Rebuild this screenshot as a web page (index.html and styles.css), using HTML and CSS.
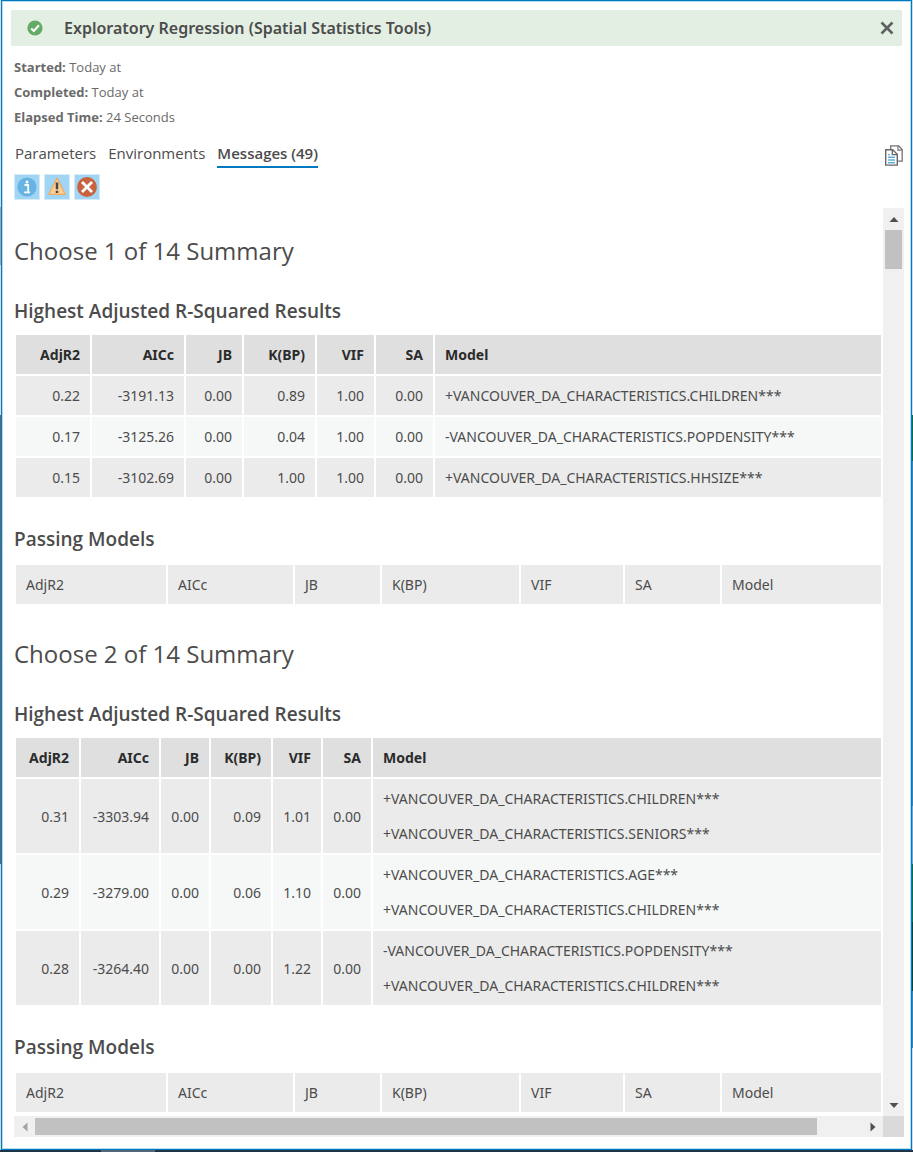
FILE: index.html
```html
<!DOCTYPE html>
<html lang="en">
<head>
<meta charset="utf-8">
<title>Exploratory Regression (Spatial Statistics Tools)</title>
<link rel="stylesheet" href="styles.css">
</head>
<body>
<main class="dialog">
  <header class="banner">
    <svg class="status" viewBox="0 0 16 16" aria-hidden="true"><circle cx="8" cy="8" r="7.6" fill="#62ab65"/><path d="M4.2 8.4l2.6 2.5 5.2-5.6" fill="none" stroke="#fff" stroke-width="2.1"/></svg>
    <h1 class="title">Exploratory Regression (Spatial Statistics Tools)</h1>
    <button class="close" aria-label="Close"><svg viewBox="0 0 14 14"><path d="M1.5 1.5l11 11M12.5 1.5l-11 11" stroke="#5f6360" stroke-width="2.6"/></svg></button>
  </header>

  <div class="info">
    <div><b>Started:</b> Today at</div>
    <div><b>Completed:</b> Today at</div>
    <div><b>Elapsed Time:</b> 24 Seconds</div>
  </div>

  <div class="toolbar">
    <nav class="tabs">
      <a class="tab" href="#parameters">Parameters</a>
      <a class="tab" href="#environments">Environments</a>
      <a class="tab active" href="#messages">Messages (49)</a>
    </nav>
    <button class="copy" aria-label="Copy messages"><svg viewBox="0 0 18 21">
      <path d="M5.7.8h8l3.5 3.700v11.700H5.700z" fill="#fff" stroke="#747474" stroke-width="1.3"/><path d="M13 .8v4.400h4.200" fill="none" stroke="#747474" stroke-width="1.2"/>
      <path d="M.7 4.700h7l4.600 4.500v10.900H.7z" fill="#fff" stroke="#686868" stroke-width="1.4"/><path d="M7.300 4.700v5h5" fill="none" stroke="#686868" stroke-width="1.3"/>
      <path d="M3 9.600h2M3 12.300h7M3 15h7M3 17.700h7" stroke="#61b1df" stroke-width="1.4"/></svg></button>
  </div>

  <div class="filters">
    <button class="filter" aria-label="Information"><svg viewBox="0 0 24 24"><circle cx="12" cy="12" r="9.6" fill="#67b3e3"/><circle cx="12" cy="7" r="1.5" fill="#fff"/><path d="M9.5 10h3.700v7M9.300 17.300h5.700" fill="none" stroke="#fff" stroke-width="1.8"/></svg></button>
    <button class="filter" aria-label="Warnings"><svg viewBox="0 0 24 24"><path d="M12 3l8.200 16.300H3.800z" fill="#fbcf96" stroke="#f0aa5d" stroke-width="1.2" stroke-linejoin="round"/><path d="M12 7.400v6.800M12 15.700v2.400" stroke="#464646" stroke-width="2.5"/></svg></button>
    <button class="filter" aria-label="Errors"><svg viewBox="0 0 24 24"><circle cx="12" cy="12" r="9.9" fill="#c9623f"/><path d="M7 7l10 10M17 7L7 17" stroke="#fff" stroke-width="2.8"/></svg></button>
  </div>

  <div class="viewer">
    <div class="messages">
      <section>
        <h2>Choose 1 of 14 Summary</h2>
        <h3>Highest Adjusted R-Squared Results</h3>
        <table class="results">
          <colgroup><col class="w74"><col class="w92"><col class="w56"><col class="w71"><col class="w57"><col class="w57"><col></colgroup>
          <thead><tr><th>AdjR2</th><th>AICc</th><th>JB</th><th>K(BP)</th><th>VIF</th><th>SA</th><th>Model</th></tr></thead>
          <tbody>
            <tr><td>0.22</td><td>-3191.13</td><td>0.00</td><td>0.89</td><td>1.00</td><td>0.00</td><td>+VANCOUVER_DA_CHARACTERISTICS.CHILDREN***</td></tr>
            <tr><td>0.17</td><td>-3125.26</td><td>0.00</td><td>0.04</td><td>1.00</td><td>0.00</td><td>-VANCOUVER_DA_CHARACTERISTICS.POPDENSITY***</td></tr>
            <tr><td>0.15</td><td>-3102.69</td><td>0.00</td><td>1.00</td><td>1.00</td><td>0.00</td><td>+VANCOUVER_DA_CHARACTERISTICS.HHSIZE***</td></tr>
          </tbody>
        </table>
        <h3>Passing Models</h3>
        <table class="passing">
          <colgroup><col class="w150"><col class="w125"><col class="w85"><col class="w137"><col class="w102"><col class="w95"><col></colgroup>
          <tbody><tr><td>AdjR2</td><td>AICc</td><td>JB</td><td>K(BP)</td><td>VIF</td><td>SA</td><td>Model</td></tr></tbody>
        </table>
      </section>
      <section>
        <h2>Choose 2 of 14 Summary</h2>
        <h3>Highest Adjusted R-Squared Results</h3>
        <table class="results">
          <colgroup><col class="w63"><col class="w78"><col class="w48"><col class="w60"><col class="w48"><col class="w48"><col></colgroup>
          <thead><tr><th>AdjR2</th><th>AICc</th><th>JB</th><th>K(BP)</th><th>VIF</th><th>SA</th><th>Model</th></tr></thead>
          <tbody>
            <tr><td>0.31</td><td>-3303.94</td><td>0.00</td><td>0.09</td><td>1.01</td><td>0.00</td><td><p>+VANCOUVER_DA_CHARACTERISTICS.CHILDREN***</p><p>+VANCOUVER_DA_CHARACTERISTICS.SENIORS***</p></td></tr>
            <tr><td>0.29</td><td>-3279.00</td><td>0.00</td><td>0.06</td><td>1.10</td><td>0.00</td><td><p>+VANCOUVER_DA_CHARACTERISTICS.AGE***</p><p>+VANCOUVER_DA_CHARACTERISTICS.CHILDREN***</p></td></tr>
            <tr><td>0.28</td><td>-3264.40</td><td>0.00</td><td>0.00</td><td>1.22</td><td>0.00</td><td><p>-VANCOUVER_DA_CHARACTERISTICS.POPDENSITY***</p><p>+VANCOUVER_DA_CHARACTERISTICS.CHILDREN***</p></td></tr>
          </tbody>
        </table>
        <h3>Passing Models</h3>
        <table class="passing">
          <colgroup><col class="w150"><col class="w125"><col class="w85"><col class="w137"><col class="w102"><col class="w95"><col></colgroup>
          <tbody><tr><td>AdjR2</td><td>AICc</td><td>JB</td><td>K(BP)</td><td>VIF</td><td>SA</td><td>Model</td></tr></tbody>
        </table>
      </section>
    </div>
    <div class="bar vertical">
      <button class="arrow" aria-label="Scroll up"><svg viewBox="0 0 10 10"><path d="M.5 8L5 3l4.500 5z" fill="#505050"/></svg></button>
      <div class="track"><div class="thumb"></div></div>
      <button class="arrow" aria-label="Scroll down"><svg viewBox="0 0 10 10"><path d="M.5 2L5 7l4.500-5z" fill="#505050"/></svg></button>
    </div>
    <div class="bar horizontal">
      <button class="arrow" aria-label="Scroll left"><svg viewBox="0 0 10 10"><path d="M7.500.5L2.500 5l5 4.500z" fill="#a3a3a3"/></svg></button>
      <div class="track"><div class="thumb"></div></div>
      <button class="arrow" aria-label="Scroll right"><svg viewBox="0 0 10 10"><path d="M2.500.5L7.500 5l-5 4.500z" fill="#505050"/></svg></button>
    </div>
    <div class="corner"></div>
  </div>
</main>
</body>
</html>
```

FILE: styles.css
```css
* { box-sizing: border-box; }

body {
  margin: 0;
  min-height: 100vh;
  padding: 0 1px 2px;
  display: flex;
  flex-direction: column;
  font-family: "Open Sans", "Noto Sans", sans-serif;
  font-size: 14px;
  color: #4c4c4c;
  background:
    linear-gradient(#52667a, #52667a) 101px 100% / 54px 2px no-repeat,
    linear-gradient(#1c3447, #1c3447) 0 100% / 100% 2px no-repeat,
    linear-gradient(#d5dde2 0 18%, #a7a7a7 18% 23%, #dcdcdc 23% 36%, #656565 36% 75%, #d5d5d5 75%) 0 0 / 1px 100% no-repeat,
    linear-gradient(#cddde6 0 36%, #08704f 36% 40%, #3386b5 40% 70%, #6ca7c9 70% 75%, #08704f 75% 80%, #08483a 80% 86%, #3386b5 86% 91%, #cddde6 91%) 100% 0 / 1px 100% no-repeat;
}

button {
  padding: 0;
  border: 0;
  background: none;
  display: flex;
  align-items: center;
  justify-content: center;
}

svg { display: block; }

.dialog {
  flex: 1;
  display: flex;
  flex-direction: column;
  padding: 9px 7px 12px 12px;
  border: 1px solid #0079c1;
  background: #fff;
  box-shadow: inset 0 0 0 1px #b3dcf2;
}

.banner {
  height: 36px;
  margin: 0 2px 0 -3px;
  padding: 0 8px 0 16px;
  display: flex;
  align-items: center;
  background: #e3efe3;
}
.status { width: 16px; height: 16px; }
.title {
  flex: 1;
  margin: 0 0 0 21px;
  font-family: "Noto Sans", "Open Sans", sans-serif;
  font-size: 16px;
  line-height: 24px;
  font-weight: 600;
}
.close svg { width: 14px; height: 14px; }

.info {
  padding-top: 9px;
  font-size: 13px;
  line-height: 25px;
  color: #6a6a6a;
}

.toolbar {
  margin: 12px 1px 0 0;
  display: flex;
  justify-content: space-between;
  align-items: center;
}
.tabs { display: flex; gap: 12px; padding-left: 1px; }
.tab {
  font-size: 15px;
  line-height: 22px;
  padding-bottom: 2px;
  color: #4c4c4c;
  text-decoration: none;
  border-bottom: 2px solid transparent;
}
.active { font-weight: 600; border-color: #0079c1; }
.copy svg { width: 18px; height: 21px; }

.filters { display: flex; gap: 4px; margin-top: 6px; }
.filter {
  width: 26px;
  height: 26px;
  border: 1px solid #d5ebf7;
  background: #a0d5f3;
}
.filter svg { width: 24px; height: 24px; }

.viewer {
  flex: 1;
  margin-top: 8px;
  display: grid;
  grid-template-columns: minmax(0, 1fr) 21px;
  grid-template-rows: minmax(0, 1fr) 21px;
}
.messages { overflow: hidden; padding-bottom: 2px; }

h2 {
  margin: 26px 0 30px;
  font-size: 24px;
  line-height: 34px;
  font-weight: 400;
}
section + section h2 { margin-top: 31px; }
h3 {
  margin: 27px 0 9px;
  font-size: 19px;
  line-height: 26px;
  font-weight: 600;
}

table {
  width: 100%;
  table-layout: fixed;
  border-spacing: 2px;
  font-family: "Noto Sans", "Open Sans", sans-serif;
}
th, td {
  padding: 10px;
  line-height: 19px;
  text-align: right;
  white-space: nowrap;
}
th { font-weight: 700; color: #2b2b2b; background: #dfdfdf; }
td { background: #ebebeb; }
tbody tr:nth-child(even) td { background: #f6f8f8; }
th:last-child, td:last-child, .passing td { text-align: left; }
.passing { margin-top: 11px; }
p { margin: 0; }
p + p { margin-top: 16px; }

.w48 { width: 48px; }
.w56 { width: 56px; }
.w57 { width: 57px; }
.w60 { width: 60px; }
.w63 { width: 63px; }
.w71 { width: 71px; }
.w74 { width: 74px; }
.w78 { width: 78px; }
.w85 { width: 85px; }
.w92 { width: 92px; }
.w95 { width: 95px; }
.w102 { width: 102px; }
.w125 { width: 125px; }
.w137 { width: 137px; }
.w150 { width: 150px; }

.bar { display: flex; background: #f0f0f0; }
.vertical { flex-direction: column; }
.arrow { width: 21px; height: 21px; flex: none; }
.arrow svg { width: 10px; height: 10px; }
.track { flex: 1; }
.thumb { background: #c1c1c1; }
.vertical .track { padding: 1px 2px; }
.vertical .thumb { height: 39px; }
.horizontal .track { padding: 2px 0; }
.horizontal .thumb { width: 94.5%; height: 17px; }
.corner { background: #dadada; }
```
